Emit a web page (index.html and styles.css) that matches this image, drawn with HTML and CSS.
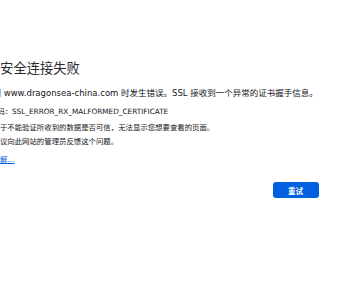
FILE: index.html
```html
<!DOCTYPE html>
<html lang="zh-CN">
<head>
  <meta charset="UTF-8" />
  <title>建立安全连接失败</title>
  <link rel="stylesheet" href="styles.css">
</head>
<body>
  <div class="container">
    <h1 class="title">建立安全连接失败</h1>
    <p class="desc">连接到 www.dragonsea-china.com 时发生错误。SSL 接收到一个异常的证书握手信息。</p>
    <p class="code">错误代码：SSL_ERROR_RX_MALFORMED_CERTIFICATE</p>
    <ul class="reasons">
      <li>由于不能验证所收到的数据是否可信，无法显示您想要查看的页面。</li>
      <li>建议向此网站的管理员反馈这个问题。</li>
    </ul>
    <p class="more"><a href="#">了解…</a></p>
    <div class="actions">
      <button type="button" id="retryBtn">重试</button>
    </div>
  </div>
</body>
</html>
```

FILE: styles.css
```css
body {
  margin: 0;
  background-color: #fff;
  color: #15141a;
  font-family: "DejaVu Sans", "Noto Sans CJK SC", sans-serif;
  font-size: 8.5px;
  overflow: hidden;
}
.container {
  width: 343px;
  margin-left: -24.5px;
  padding-top: 58px;
}
.title {
  margin: 0 0 8px -2px;
  font-family: "Noto Sans", "Noto Sans CJK SC", sans-serif;
  font-size: 13.3px;
  line-height: 20px;
  font-weight: 400;
  color: #2b2a33;
}
.desc {
  margin: 0 0 5px;
  line-height: 14px;
}
.code {
  margin: 0 0 3px;
  font-size: 7.3px;
  line-height: 13px;
}
.reasons {
  margin: 0;
  padding-left: 17px;
  font-size: 7.4px;
  line-height: 14px;
  list-style: none;
}
.more {
  margin: 4px 0 0;
  padding-left: 17px;
  font-size: 7.4px;
  line-height: 14px;
}
.more a {
  color: #0061e0;
}
.actions {
  display: flex;
  justify-content: flex-end;
  margin-top: 15px;
}
#retryBtn {
  width: 46px;
  height: 16px;
  padding: 0;
  border: none;
  border-radius: 3px;
  background-color: #0061e0;
  color: #fff;
  font-family: "Noto Sans CJK SC", sans-serif;
  font-size: 7.5px;
  font-weight: 600;
}
```
